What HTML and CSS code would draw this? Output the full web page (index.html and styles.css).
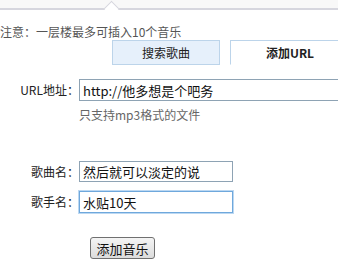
FILE: index.html
```html
<!DOCTYPE html>
<html>
<head>
    <title>添加音乐</title>
    <link rel="stylesheet" href="styles.css">
</head>
<body>
    <div class="top"></div>
    <div class="panel">
        <span class="arrow"></span>
        <p class="note">注意：一层楼最多可插入10个音乐</p>

        <div class="tabs">
            <div class="tab">搜索歌曲</div>
            <div class="tab active">添加URL</div>
        </div>

        <div class="form">
            <div class="row">
                <label>URL地址：</label>
                <input type="text" class="url" value="http://他多想是个吧务">
            </div>
            <p class="hint">只支持mp3格式的文件</p>

            <div class="row song">
                <label>歌曲名：</label>
                <input type="text" value="然后就可以淡定的说">
            </div>
            <div class="row singer">
                <label>歌手名：</label>
                <input type="text" class="focus" value="水贴10天">
            </div>

            <button id="addButton">添加音乐</button>
        </div>
    </div>
</body>
</html>
```

FILE: styles.css
```css
body {
    margin: 0;
    background-color: white;
    color: #333;
    font-family: "Noto Sans CJK SC", "Noto Sans", sans-serif;
    font-size: 12px;
    overflow: hidden;
}

.top {
    height: 8px;
    background-color: #f8f8f8;
}

.panel {
    position: relative;
    border-top: 2px solid #d6d6de;
}

.arrow {
    position: absolute;
    left: 106px;
    top: -7px;
    width: 10px;
    height: 10px;
    background-color: white;
    border-top: 1px solid #d6d6de;
    border-left: 1px solid #d6d6de;
    transform: rotate(45deg);
}

.note {
    margin: 0;
    padding-top: 15px;
    line-height: 14px;
    color: #555;
    white-space: nowrap;
}

.tabs {
    display: flex;
    gap: 10px;
    margin-top: 1px;
    padding-left: 112px;
}

.tab {
    width: 106px;
    height: 23px;
    line-height: 23px;
    text-align: center;
    background-color: #e6f0fb;
    border: 1px solid #bcd4ea;
    color: #222;
    flex-shrink: 0;
}

.tab.active {
    width: 118px;
    background-color: white;
    font-weight: bold;
    border-bottom-color: white;
}

.form {
    padding-top: 14px;
}

.row {
    display: flex;
    align-items: center;
}

.row label {
    width: 79px;
    flex-shrink: 0;
    text-align: right;
    line-height: 14px;
    color: #222;
}

input[type="text"] {
    box-sizing: border-box;
    width: 154px;
    height: 21px;
    margin: 0;
    padding: 0 3px;
    border: 1px solid #8ea3b4;
    font-family: "Noto Sans CJK SC", sans-serif;
    font-size: 13px;
    color: #111;
    outline: none;
}

input.url {
    width: 300px;
    height: 22px;
    flex-shrink: 0;
}

input.focus {
    height: 22px;
    border-color: #6fa8dc;
    box-shadow: 0 0 0 1px #bcd8f2;
}

.hint {
    margin: 7px 0 0 79px;
    line-height: 14px;
    color: #666;
}

.song {
    margin-top: 39px;
}

.singer {
    margin-top: 9px;
}

#addButton {
    display: block;
    box-sizing: border-box;
    width: 65px;
    height: 22px;
    margin: 24px 0 0 90px;
    padding: 0;
    border: 1px solid #707070;
    border-radius: 3px;
    background: linear-gradient(#f4f4f4, #dcdcdc);
    font-family: "Noto Sans CJK SC", sans-serif;
    font-size: 13px;
    color: #111;
}
```
